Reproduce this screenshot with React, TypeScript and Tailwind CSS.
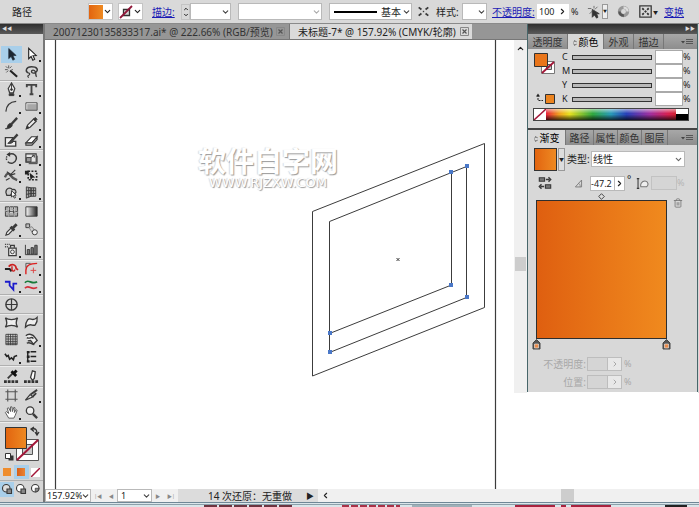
import React from "react";
import { ChevronDown, ChevronRight, ChevronLeft, ChevronUp, Trash2 } from "lucide-react";

const Icon: React.FC<{ children: React.ReactNode; className?: string }> = ({
  children,
  className = "size-4",
}) => (
  <svg
    viewBox="0 0 16 16"
    className={`${className} shrink-0`}
    fill="none"
    stroke="#3a3a3a"
    strokeWidth="1"
    aria-hidden="true"
  >
    {children}
  </svg>
);

type Tool = { name: string; more?: boolean; active?: boolean; icon: React.ReactNode };

const arrow = "M5 1.5v11l2.6-2.4 1.8 4 2-1-1.8-3.8 3.4-.3z";

const toolGroups: { height: string; tools: Tool[] }[] = [
  {
    height: "h-[17px]",
    tools: [
      { name: "选择", active: true, icon: <path d={arrow} fill="#1c2733" stroke="#1c2733" strokeWidth=".6" /> },
      { name: "直接选择", more: true, icon: <path d={arrow} fill="#fff" stroke="#222" strokeWidth="1.2" /> },
      {
        name: "魔棒",
        icon: (
          <>
            <path d="M6.500 7l7.500 6.500" strokeWidth="2.200" stroke="#222" />
            <path d="M5 1.500v3M2 2.500l2 2M8 2.500l-2 2M1 6h3M2.500 9l2-2M8 6h1.500" stroke="#555" />
          </>
        ),
      },
      {
        name: "套索",
        icon: (
          <>
            <path d="M4.500 9.500C1 8 2 3 8 3s7.500 3 5 5.500c-2 2-5 1.500-5-.5s3-2 4 0 0 4 1.500 5.500" strokeWidth="1.500" />
            <path d="M4.500 9.500c2 0 2 2 .5 2.500s-1 1.500 0 2.500" strokeWidth="1.300" />
          </>
        ),
      },
    ],
  },
  {
    height: "h-[17px]",
    tools: [
      {
        name: "钢笔",
        more: true,
        icon: (
          <>
            <path d="M8 1L4.500 7l1.500 4.500h4L11.500 7z" fill="#eee" strokeWidth="1.300" />
            <path d="M8 2v6" />
            <circle cx="8" cy="8" r="1" fill="#333" />
            <path d="M5.500 12.500h5v2h-5z" fill="#333" />
          </>
        ),
      },
      { name: "文字", more: true, icon: <path d="M3 5.500V3h10v2.500M8 3v10M6 13h4" strokeWidth="2" stroke="#444" /> },
      { name: "弧形", more: true, icon: <path d="M2 13.500C2.500 7 6 3 13 2.500" strokeWidth="1.300" /> },
      {
        name: "矩形",
        more: true,
        icon: (
          <>
            <path d="M2 4h12v8H2z" fill="#a8a8a8" stroke="#555" />
            <path d="M3 11V5h10" stroke="#ddd" />
          </>
        ),
      },
      {
        name: "画笔",
        icon: (
          <>
            <path d="M14 2L7.500 9" strokeWidth="2.500" />
            <path d="M8 8.500c1.500 1.500.5 3-1.500 4S2 14 1.500 13.500c2 0 2-1 2.500-3s2.500-3.500 4-2z" fill="#333" />
          </>
        ),
      },
      {
        name: "铅笔",
        more: true,
        icon: (
          <>
            <path d="M4 9.500L10.500 3l2.500 2.500L6.500 12 2.500 13.500z" fill="#eee" strokeWidth="1.300" />
            <path d="M10 3.500l2 2 2-2-2-2zM2.500 13.500l1-3 2 2z" fill="#333" />
          </>
        ),
      },
      {
        name: "斑点画笔",
        icon: (
          <>
            <path d="M1.500 5h8l-2 4h5v5h-11z" fill="#eee" strokeWidth="1.400" />
            <path d="M14.500 1.500L9 7.500" strokeWidth="2.500" />
            <path d="M8.500 7C6 7.500 6.500 10 4 11c3 .5 6-.5 6-2.500z" fill="#444" />
          </>
        ),
      },
      {
        name: "橡皮擦",
        more: true,
        icon: (
          <>
            <path d="M2 10.500L8 4h6l-5.500 6.500z" fill="#fff" strokeWidth="1.200" />
            <path d="M2 10.500V13h6.500l5.500-6V4l-5.500 6.500z" fill="#aaa" strokeWidth="1.200" />
          </>
        ),
      },
    ],
  },
  {
    height: "h-[17px]",
    tools: [
      {
        name: "旋转",
        more: true,
        icon: (
          <>
            <path d="M5 3.500c6-2 9 2 8 5.500-1 4-6 5.500-9 2.500" strokeWidth="1.500" />
            <path d="M3 9.500C2 8 2.500 6 4 5" strokeDasharray="1.500 1" strokeWidth="1.500" />
            <path d="M6.500 1v5L2.500 3.800z" fill="#333" stroke="none" />
          </>
        ),
      },
      {
        name: "比例缩放",
        more: true,
        icon: (
          <>
            <path d="M2 3h11v9H2z" fill="#e5e5e5" strokeWidth="1.200" />
            <path d="M2.500 7h5v4.500h-5z" fill="#999" />
            <path d="M7.500 7L11 4.500M8.500 4.500H11V7M14 5v8.500H5" />
          </>
        ),
      },
      {
        name: "变形",
        more: true,
        icon: (
          <>
            <path d="M1 10c2-5 4-5 6-2s4 4 7 5" strokeWidth="2.500" stroke="#555" />
            <path d="M3 4l4 3 5-5M6 8l6-2M2 13l4-2" strokeWidth="1.200" />
          </>
        ),
      },
      {
        name: "自由变换",
        icon: (
          <>
            <path d="M4.500 3.500h9v9h-9z" strokeDasharray="2 1.500" strokeWidth="1.700" stroke="#222" />
            <path d="M1 3h4v4H1zM6 5l6 5-3 .5L7 13z" fill="#222" stroke="none" />
          </>
        ),
      },
      {
        name: "符号喷枪",
        more: true,
        icon: (
          <>
            <path d="M2 8c0-5 5-6 7-3 3-1 5 2 3 4H8l-1 2H3z" fill="#ccc" strokeWidth="1.300" />
            <path d="M8 6v7l1.700-1.700L11 14l1.300-.6-1.300-2.500H13z" fill="#fff" />
          </>
        ),
      },
      {
        name: "透视",
        more: true,
        icon: (
          <>
            <path d="M2.500 2l5 1v9l-5 2zM7.500 3h5v9h-5z" fill="#aaa" />
            <path d="M5 2.500v10.500M10 3v9M2.500 6h10M2.500 10l5-1h5" />
          </>
        ),
      },
    ],
  },
  {
    height: "h-[18px]",
    tools: [
      {
        name: "网格",
        icon: (
          <>
            <path d="M1.500 3h13v10h-13z" fill="#aaa" />
            <path d="M5.500 3c2 3-1 6 0 10M10.500 3c-2 4 1 7 0 10M1.500 8c4-2 8 2 13 0" stroke="#eee" strokeWidth="2" />
            <path d="M5.500 3c2 3-1 6 0 10M10.500 3c-2 4 1 7 0 10M1.500 8c4-2 8 2 13 0" />
          </>
        ),
      },
      {
        name: "渐变",
        icon: (
          <>
            <defs>
              <linearGradient id="toolGradient">
                <stop offset="0" stopColor="#fff" />
                <stop offset="1" stopColor="#222" />
              </linearGradient>
            </defs>
            <path d="M2 3h12v10H2z" fill="url(#toolGradient)" />
          </>
        ),
      },
      {
        name: "吸管",
        more: true,
        icon: (
          <>
            <path d="M2 14l1-3 5-5 2 2-5 5z" fill="#eee" strokeWidth="1.200" />
            <path d="M7 5l4 4M9.500 6.500l4-4" strokeWidth="3" />
          </>
        ),
      },
      {
        name: "混合",
        icon: (
          <>
            <path d="M2 2h4v4H2z" fill="#bbb" />
            <path d="M5.500 6l3-1 3 4-3 2z" fill="#ccc" stroke="#888" />
            <circle cx="11.500" cy="11" r="2.700" fill="#eee" />
          </>
        ),
      },
    ],
  },
  {
    height: "h-[20px]",
    tools: [
      {
        name: "符号喷枪器",
        more: true,
        icon: (
          <>
            <path d="M5 6.500h8v8H5z" fill="#eee" strokeWidth="1.300" />
            <path d="M7 6V3.500h4V6" strokeWidth="1.300" />
            <path d="M1 2.500h6M1 5h4" strokeDasharray="1 1" strokeWidth="1.500" />
            <circle cx="9" cy="10.500" r="2" />
          </>
        ),
      },
      {
        name: "柱形图",
        more: true,
        icon: (
          <>
            <path d="M1.500 3v10.500h13" />
            <path d="M3.500 8h2.500v5H3.500zM7.500 6H10v7H7.500zM11.500 3.500h2.500V13h-2.500z" fill="#777" />
          </>
        ),
      },
    ],
  },
  {
    height: "h-[17px]",
    tools: [
      {
        name: "路径笔",
        more: true,
        icon: (
          <>
            <path d="M1 8.500h5l2 2.500" stroke="#222" strokeWidth="2.200" />
            <path d="M5 6c3-4 8-2 8 2l2 1.500" stroke="#c22" strokeWidth="1.800" />
            <path d="M8.500 5.500v4c1 2 3 1.500 3-.5" stroke="#c22" strokeWidth="1.500" />
          </>
        ),
      },
      {
        name: "圆角",
        more: true,
        icon: (
          <>
            <path d="M2 14V10C2 5 5 2.500 14 2.500" stroke="#d22" strokeWidth="1.500" />
            <path d="M2 7V2.500h5" stroke="#555" />
            <path d="M10 7v6M7 10h6" stroke="#d44" />
          </>
        ),
      },
      { name: "折线", more: true, icon: <path d="M1 4h5v4l4 4.500V6h4" stroke="#1a1acc" strokeWidth="1.900" /> },
      {
        name: "波浪",
        more: true,
        icon: (
          <>
            <path d="M1 5c4-5 7 3 13-1" stroke="#197a3a" strokeWidth="1.800" />
            <path d="M1 11c4-5 7 3 13-1" stroke="#d3303a" strokeWidth="1.800" />
          </>
        ),
      },
    ],
  },
  {
    height: "h-[18px]",
    tools: [
      {
        name: "定位",
        icon: (
          <>
            <circle cx="8" cy="8" r="6" strokeWidth="1.500" />
            <path d="M8 2v12M2 8h12" strokeWidth="1.300" />
          </>
        ),
      },
    ],
  },
  {
    height: "h-[17px]",
    tools: [
      { name: "封套", icon: <path d="M1.500 3c3 2.500 10 2.500 13 0-2 3.500-2 6.500 0 10-3-2.500-10-2.500-13 0 2-3.500 2-6.500 0-10z" fill="#eee" strokeWidth="1.400" /> },
      { name: "旗形", icon: <path d="M1.500 13c0-4 1-6 2.500-8 3-3 5 3 10-2.500.5 4-.5 6-2 8-3 2-5-3-10.500 2.500z" fill="#eee" strokeWidth="1.400" /> },
      { name: "网点", icon: <path d="M2 2.500h12v11H2zM2 5h12M2 7.500h12M2 10h12M2 12h12M4.500 2v12M7 2v12M9.500 2v12M12 2v12" strokeWidth=".9" /> },
      {
        name: "涂抹",
        more: true,
        icon: (
          <>
            <path d="M2 4c3-3 8-1 9 1l3 4-4 4-3-4-3 .5" fill="#eee" strokeWidth="1.500" />
            <path d="M3 6c3 2 5-2 7 1M3 12c3-2 5 1 8 1.500" strokeWidth="1.500" />
          </>
        ),
      },
      { name: "褶皱", more: true, icon: <path d="M1 5l2 3 1.500-1L6 11l2-1.500 2 2L11 8l3-1" strokeWidth="1.700" stroke="#222" /> },
      {
        name: "分布",
        icon: (
          <>
            <path d="M7 3h6M7 8h6M7 13h6M4 3v10" strokeWidth="1.500" stroke="#222" />
            <path d="M3 2h3v2.500H3zM3 7h3v2.500H3zM3 12h3v2.500H3z" fill="#222" stroke="none" />
          </>
        ),
      },
    ],
  },
  {
    height: "h-[20px]",
    tools: [
      {
        name: "取色",
        icon: (
          <>
            <path d="M4 10l5-5" strokeWidth="2" />
            <path d="M8 2.500l5 5M10 5l3.500-3.500" strokeWidth="3" stroke="#111" />
            <path d="M0 13.500h16" strokeDasharray="3 1" strokeWidth="3" stroke="#333" />
          </>
        ),
      },
      {
        name: "着色",
        icon: (
          <>
            <path d="M7 9l2-7 3 1-1 7-2 2z" fill="#fff" strokeWidth="1.400" />
            <path d="M0 13.500h16" strokeDasharray="3 1" strokeWidth="3" stroke="#333" />
          </>
        ),
      },
    ],
  },
  {
    height: "h-[17px]",
    tools: [
      { name: "画板", icon: <path d="M4 1.500v13M12 1.500v13M1.500 4h13M1.500 12h13" strokeWidth="1.200" stroke="#555" /> },
      {
        name: "切片",
        more: true,
        icon: (
          <>
            <path d="M1.500 13l5-6 3 2.500z" fill="#eee" strokeWidth="1.300" />
            <path d="M7 7l7-5M9 9.500l4-4" strokeWidth="2" />
          </>
        ),
      },
      {
        name: "抓手",
        more: true,
        icon: <path d="M5 14L1.500 8l1-1L5 9 3.500 3.500 5 3l2 4V2h1.500l.5 5 1.500-4.500 1.300.5L11 8l2-3 1 .7-2 5.300-1.500 3z" fill="#fff" stroke="#555" />,
      },
      {
        name: "缩放",
        icon: (
          <>
            <circle cx="6.500" cy="6" r="4" fill="#eee" strokeWidth="1.400" />
            <path d="M9.500 9.500l4.500 4.500" strokeWidth="2.500" />
          </>
        ),
      },
    ],
  },
];

const NoPaint = ({ className }: { className: string }) => (
  <svg viewBox="0 0 14 14" className={`${className} shrink-0`} fill="none" aria-hidden="true">
    <path d="M0 0h14v14H0z" fill="#fff" />
    <path d="M4.500 4.500h6v6h-6z" fill="#d8d8d8" stroke="#333" strokeWidth="1.300" />
    <path d="M1 13L13 1" stroke="#8f1638" strokeWidth="1.800" />
  </svg>
);

const Dropdown: React.FC<{ label: string; className: string; options?: string[]; muted?: boolean }> = ({
  label,
  className,
  options = [""],
  muted,
}) => (
  <span className={`relative shrink-0 border-[#b9b9b9] bg-white ${className}`}>
    <select
      aria-label={label}
      className="block size-full appearance-none bg-transparent pl-px pr-2 text-inherit outline-none"
    >
      {options.map((option) => (
        <option key={option}>{option}</option>
      ))}
    </select>
    <ChevronDown
      className={`pointer-events-none absolute right-0 top-1/2 size-[9px] -translate-y-1/2 ${
        muted ? "text-[#aaa]" : "text-[#444]"
      }`}
      strokeWidth={3}
    />
  </span>
);

const TopBar = () => (
  <header className="flex h-[24px] shrink-0 items-center overflow-hidden border-b border-[#8a8a8a] bg-[#d9d9d9] pl-[12px]">
    <span className="w-[76px] shrink-0">路径</span>
    <button aria-label="填色" className="flex h-[17px] shrink-0 items-center border border-[#c4c4c4] bg-white">
      <span className="size-[14px] bg-linear-to-r from-[#e2640f] to-[#ee8a22]" />
      <ChevronDown className="size-[9px]" strokeWidth={3} />
    </button>
    <button aria-label="描边颜色" className="ml-[5px] flex h-[17px] shrink-0 items-center border border-[#c4c4c4] bg-white">
      <NoPaint className="size-[14px]" />
      <ChevronDown className="size-[9px]" strokeWidth={3} />
    </button>
    <a href="#stroke" className="ml-[9px] w-[29px] shrink-0 text-[#1b1bb5] underline">
      描边:
    </a>
    <button aria-label="调整描边粗细" className="flex h-[16px] w-[9px] shrink-0 flex-col items-center justify-center border border-[#c4c4c4]">
      <ChevronUp className="size-[6px]" strokeWidth={4} />
      <ChevronDown className="size-[6px]" strokeWidth={4} />
    </button>
    <Dropdown label="描边粗细" className="h-[17px] w-[41px] border" />
    <Dropdown label="宽度配置" className="ml-[7px] h-[17px] w-[84px] border" muted />
    <span className="ml-[7px] flex h-[17px] w-[83px] shrink-0 items-center border border-[#b9b9b9] bg-white pl-[4px]">
      <span className="h-[2px] flex-1 bg-black" />
      <Dropdown label="画笔定义" className="h-[15px] w-[34px] pl-[3px]" options={["基本"]} />
    </span>
    <Icon className="ml-[6px] size-[11px]">
      <path d="M1 2l4 3M15 2l-4 3M1 14l4-3M15 14l-4-3" strokeWidth="2.600" />
      <path d="M7 8h2" strokeWidth="2" />
    </Icon>
    <span className="ml-[7px] w-[26px] shrink-0">样式:</span>
    <Dropdown label="样式" className="h-[17px] w-[25px] border" />
    <a href="#opacity" className="ml-[5px] w-[45px] shrink-0 whitespace-nowrap text-[#1b1bb5] underline">
      不透明度:
    </a>
    <input
      aria-label="不透明度"
      defaultValue="100"
      className="h-[15px] w-[21px] shrink-0 bg-white pl-[2px] text-[9px] outline-none"
    />
    <button aria-label="不透明度滑块" className="flex h-[15px] w-[11px] shrink-0 items-center bg-white">
      <ChevronRight className="size-[9px]" strokeWidth={3} />
    </button>
    <span className="ml-[2px] w-[16px] shrink-0 text-[9px]">%</span>
    <button aria-label="选择类似对象" className="flex h-[16px] shrink-0 items-center">
      <Icon className="size-[14px]">
        <path d="M1 4h4M8 1v3M3 10l3-3M12 2l-3 3" strokeWidth="1" stroke="#666" />
        <path d="M6 5v9l2.500-2.500L11 15l1.500-1L11 10h3z" fill="#333" />
      </Icon>
      <span className="ml-px h-[15px] w-[6px] border border-[#999] bg-[#eee] text-center text-[4px] leading-[13px]">▼</span>
    </button>
    <button aria-label="重新着色" className="ml-[9px] shrink-0">
      <Icon className="size-[13px]">
        <circle cx="8" cy="8" r="5" stroke="#999" strokeWidth="4" />
        <path d="M3 8a5 5 0 0 0 5.500 5" stroke="#555" strokeWidth="3" />
        <path d="M13 8A5 5 0 0 0 8 3" stroke="#ddd" strokeWidth="3" />
      </Icon>
    </button>
    <button aria-label="对齐" className="ml-[9px] flex shrink-0 items-center">
      <Icon className="size-[13px]">
        <path d="M1 1h14v14H1z" strokeWidth="1.600" />
        <path d="M4 4l2 2M12 4l-2 2M4 12l2-2M12 12l-2-2" strokeWidth="2.200" />
        <circle cx="8" cy="8" r="1" fill="#333" />
      </Icon>
      <span className="ml-px text-[5px]">▼</span>
    </button>
    <a href="#transform" className="ml-[6px] shrink-0 text-[#1b1bb5] underline">
      变换
    </a>
  </header>
);

const Toolbox = () => (
  <aside className="flex w-[45px] shrink-0 flex-col border-r-2 border-[#777] bg-[#d6d6d6]">
    <div className="h-[10px] bg-linear-to-b from-[#2f2f2f] to-[#5a5a5a] pl-[2px] text-[5px] leading-[9px] text-[#ddd]">
      ◀◀
    </div>
    <div className="pt-[12px]">
      {toolGroups.map((group) => (
        <div key={group.tools[0].name} className="grid grid-cols-2 border-b border-[#b0b0b0] pl-px pr-px shadow-[0_1px_0_#ececec]">
          {group.tools.map((tool) => (
            <button
              key={tool.name}
              aria-label={tool.name}
              className={`relative flex items-center justify-center ${group.height} ${
                tool.active ? "bg-[#a9cfea]" : ""
              }`}
            >
              <Icon className="size-[15px]">{tool.icon}</Icon>
              {tool.more && <span className="absolute bottom-px right-px size-[2px] bg-[#222]" />}
            </button>
          ))}
        </div>
      ))}
    </div>
    <div className="flex h-[42px] items-start justify-center pt-[4px]">
      <svg viewBox="0 0 38 36" className="h-[36px] w-[38px]" fill="none" aria-label="填色和描边">
        <defs>
          <linearGradient id="toolFill">
            <stop offset="0" stopColor="#e2640f" />
            <stop offset="1" stopColor="#ee8a22" />
          </linearGradient>
        </defs>
        <path d="M13.500 13.500h22v21h-22z" fill="#fff" stroke="#555" />
        <path d="M19.500 18.500h10v10h-10z" fill="#ccc" stroke="#555" />
        <path d="M14 34L35 14" stroke="#a31638" strokeWidth="2" />
        <path d="M2.500 1.500h21v21h-21z" fill="url(#toolFill)" stroke="#333" />
        <path d="M29 3c4-1 5 1 5 5M31 1l-3 2 3 2.500M32 6l2 3 2-3" stroke="#333" strokeWidth="1.300" />
        <path d="M5.500 29.500h5v5h-5z" fill="#333" />
        <path d="M2.500 27.500h5v5h-5z" fill="#fff" stroke="#333" />
      </svg>
    </div>
    <div className="grid h-[16px] grid-cols-3 place-items-center">
      <button aria-label="颜色" className="size-[8px] bg-[#ef8c2c]" />
      <button aria-label="渐变填充" className="flex h-[14px] w-full items-center justify-center bg-[#a9cfea]">
        <span className="size-[8px] bg-linear-to-r from-[#d85f18] to-[#ea8433]" />
      </button>
      <button aria-label="无">
        <svg viewBox="0 0 9 9" className="size-[9px] bg-white" aria-hidden="true">
          <path d="M0 9L9 0" stroke="#a31638" strokeWidth="1.500" />
        </svg>
      </button>
    </div>
    <div className="grid h-[17px] grid-cols-3 place-items-center border-t border-[#b0b0b0]">
      {["正常绘图", "背面绘图", "内部绘图"].map((mode, i) => (
        <button
          key={mode}
          aria-label={mode}
          className={`flex h-[15px] w-full items-center justify-center ${i === 0 ? "bg-[#a9cfea]" : ""}`}
        >
          <Icon className="size-[12px]">
            <circle cx="7" cy="7" r="5" fill={i === 0 ? "#ddd" : "#fff"} strokeWidth="1.500" />
            {i < 2 ? <path d="M8 8h6v6H8z" fill="#888" strokeWidth="1.500" /> : <path d="M7 7h5a5 5 0 0 1-5 5z" fill="#888" />}
          </Icon>
        </button>
      ))}
    </div>
  </aside>
);

const CloseBox = () => (
  <svg viewBox="0 0 9 9" className="size-[9px] shrink-0" fill="none" aria-hidden="true">
    <path d="M.5.5h8v8h-8z" stroke="#888" />
    <path d="M2.500 2.500l4 4M6.500 2.500l-4 4" stroke="#555" strokeWidth="1.200" />
  </svg>
);

const DocumentTabs = () => (
  <nav className="flex h-[16px] shrink-0 overflow-hidden border-b border-[#777] bg-[#969696] whitespace-nowrap">
    <div className="flex w-[245px] shrink-0 items-center justify-between border-r border-[#777] pl-[8px] pr-[4px] text-[#333]">
      <button>20071230135833317.ai* @ 222.66% (RGB/预览)</button>
      <button aria-label="关闭">
        <CloseBox />
      </button>
    </div>
    <div className="flex w-[182px] shrink-0 items-center justify-between bg-[#dadada] pl-[8px] pr-[3px]">
      <button>未标题-7* @ 157.92% (CMYK/轮廓)</button>
      <button aria-label="关闭">
        <CloseBox />
      </button>
    </div>
  </nav>
);

const anchors = [
  [405, 132],
  [421, 126],
  [421, 257],
  [405, 245],
  [284, 293],
  [284, 312],
];

const Canvas = () => (
  <div className="relative min-w-0 flex-1 overflow-hidden bg-white">
    <svg viewBox="0 0 469 449" className="block h-[449px] w-[469px]" fill="none" stroke="#3c3c3c">
      <path d="M10.500 0v449M450.500 0v449" strokeWidth="1.200" />
      <path d="M267.500 171.500l172-68v164l-172 68.500z" />
      <path d="M284.500 181.500l137-55v131l-137 55zM406.500 132.500v112.500l-122 48.500" />
      <path d="M351.500 218l3 3M354.500 218l-3 3" />
      {anchors.map(([x, y]) => (
        <rect key={`${x}-${y}`} x={x - 1} y={y - 2} width="4" height="4" fill="#4a78c8" stroke="none" />
      ))}
    </svg>
    <div className="absolute left-[153px] top-[105px] flex flex-col items-center text-white [text-shadow:1px_1px_1px_#999,-1px_0_1px_#ddd]">
      <span className="text-[28px] leading-[32px] font-bold">软件自字网</span>
      <span className="font-['DejaVu_Sans'] text-[13px] leading-[12px]">WWW.RJZXW.COM</span>
    </div>
  </div>
);

const VerticalScroll = () => (
  <div className="flex h-[353px] w-[13px] shrink-0 flex-col items-center bg-[#f0f0f0]">
    <button aria-label="向上滚动" className="flex h-[16px] items-center">
      <ChevronUp className="size-[9px]" strokeWidth={3} />
    </button>
    <span className="mt-[201px] h-[14px] w-[11px] bg-[#cdcdcd]" />
  </div>
);

const PanelTabs: React.FC<{ tabs: { name: string; width: string }[]; active: string }> = ({ tabs, active }) => (
  <div className="flex h-[15px] items-stretch bg-linear-to-b from-[#a8a8a8] to-[#8d8d8d] text-[#333]">
    {tabs.map((tab) => (
      <button
        key={tab.name}
        className={`shrink-0 whitespace-nowrap border-r border-[#777] text-center text-[10px] leading-[14px] ${tab.width} ${
          tab.name === active ? "bg-[#d8d8d8] text-black" : ""
        }`}
      >
        {tab.name === active && (
          <svg viewBox="0 0 5 8" className="mr-[2px] inline h-[8px] w-[4px]" fill="none" stroke="#333" aria-hidden="true">
            <path d="M.5 3l2-2 2 2M.5 5l2 2 2-2" />
          </svg>
        )}
        {tab.name}
      </button>
    ))}
    <button aria-label="面板菜单" className="ml-auto mr-[4px] flex items-center">
      <svg viewBox="0 0 12 8" className="h-[8px] w-[12px]" fill="none" stroke="#444" aria-hidden="true">
        <path d="M0 3h4L2 5.500z" fill="#444" stroke="none" />
        <path d="M5 1.500h7M5 3.500h7M5 5.500h7" strokeWidth=".8" />
      </svg>
    </button>
  </div>
);

const ColorPanel = () => (
  <section className="h-[79px] px-[5px] pt-px">
    <div className="flex">
      <div className="h-[56px] w-[29px] shrink-0 pt-[2px]">
        <svg viewBox="0 0 24 52" className="h-[52px] w-[24px]" fill="none" aria-label="填色和描边">
          <path d="M8.500 9.500h13v12h-13z" fill="#fff" stroke="#777" />
          <path d="M13.500 12.500h5v5h-5z" fill="#ccc" stroke="#555" />
          <path d="M9 21L21 10" stroke="#a31638" strokeWidth="1.800" />
          <path d="M1.500 1.500h13v13h-13z" fill="#e9751a" stroke="#333" />
          <path d="M12.500 42.500h9v9h-9z" fill="#ec8420" stroke="#333" />
          <path d="M5 43v5.500h5" stroke="#222" strokeDasharray="2 1" />
          <path d="M3 44.500l2-3 2 3z" fill="#222" />
        </svg>
      </div>
      <div className="flex-1">
        {["C", "M", "Y", "K"].map((channel) => (
          <div key={channel} className="flex h-[14px] items-center text-[9px]">
            <label htmlFor={`channel-${channel}`} className="w-[10px] shrink-0">
              {channel}
            </label>
            <input
              id={`channel-${channel}`}
              type="range"
              defaultValue={0}
              className="h-[5px] w-0 min-w-0 flex-1 appearance-none border border-[#333] bg-[#b9b9b9] [&::-webkit-slider-thumb]:appearance-none"
            />
            <input
              aria-label={`${channel} 值`}
              className="ml-[3px] h-[14px] w-[28px] shrink-0 border border-[#aaa] bg-white outline-none"
            />
            <span className="w-[9px] shrink-0 text-[9px]">%</span>
          </div>
        ))}
      </div>
    </div>
    <div className="mr-[3px] mt-[2px] flex h-[13px] border border-[#444]">
      <svg viewBox="0 0 12 11" className="h-full w-[12px] bg-white" aria-hidden="true">
        <path d="M0 11L12 0" stroke="#a31638" strokeWidth="1.500" />
      </svg>
      <div className="flex-1 bg-[linear-gradient(to_bottom,#ffffff88,transparent_40%,transparent_50%,#000000bb),linear-gradient(to_right,#e8203a,#f0a020_10%,#e8e020_18%,#30a840_36%,#2a9ab8_50%,#2840b8_62%,#a030a0_80%,#d82050_94%,#d02030)]" />
      <div className="w-[12px] bg-linear-to-b from-white from-50% to-black to-50%" />
    </div>
  </section>
);

const Stop = () => (
  <svg viewBox="0 0 9 11" className="h-[11px] w-[9px]" aria-label="渐变滑块">
    <path d="M4.500.5L8 4v6H1V4z" fill="#555" stroke="#444" />
    <path d="M2.500 5h4v4h-4z" fill="#e78a4c" stroke="#eee" strokeWidth=".6" />
  </svg>
);

const DisabledField: React.FC<{ label: string; id: string }> = ({ label, id }) => (
  <div className="flex h-[18px] items-center text-[#a8a8a8]">
    <label htmlFor={id} className="w-[54px] text-right">
      {label}
    </label>
    <input id={id} disabled className="ml-px h-[14px] w-[20px] border border-r-0 border-[#bdbdbd] bg-[#d5d5d5]" />
    <button disabled aria-label={`${label}滑块`} className="flex h-[14px] w-[15px] items-center justify-center border border-[#bdbdbd] bg-[#e8e8e8]">
      <ChevronRight className="size-[8px]" strokeWidth={3} />
    </button>
    <span className="ml-[2px] text-[9px]">%</span>
  </div>
);

const GradientPanel = () => (
  <section className="pb-px pl-[4px] pr-[12px]">
    <div className="flex h-[28px] items-center pl-[2px]">
      <span className="size-[23px] shrink-0 border border-[#333] bg-linear-to-r from-[#e2640f] to-[#ee8a22]" />
      <button aria-label="渐变预设" className="ml-px flex h-[23px] w-[7px] shrink-0 items-center border border-[#999] bg-[#ddd] text-[5px]">
        ▼
      </button>
      <label htmlFor="gradient-type" className="ml-[2px] w-[24px] shrink-0 whitespace-nowrap">
        类型:
      </label>
      <span className="relative w-0 min-w-0 flex-1">
        <select id="gradient-type" className="block h-[16px] w-full appearance-none border border-[#b9b9b9] bg-white pl-px outline-none">
          <option>线性</option>
        </select>
        <ChevronDown className="pointer-events-none absolute right-[2px] top-[4px] size-[9px] text-[#666]" strokeWidth={3} />
      </span>
    </div>
    <div className="flex h-[20px] items-center pl-[2px]">
      <button aria-label="反向渐变" className="ml-[4px]">
        <Icon className="size-[14px]">
          <path d="M1.500 2h6v4h-6zM8.500 10h6v4h-6z" fill="#777" strokeWidth="1.300" />
          <path d="M9 4h4M12 1.500L14.500 4 12 6.500M7 12H3M4 9.500L1.500 12 4 14.500" strokeWidth="1.600" />
        </Icon>
      </button>
      <Icon className="ml-[22px] size-[11px]">
        <path d="M2 13L11 3v10z" strokeWidth="1.300" stroke="#777" />
        <path d="M7 8c2 1 2 3 2 5" stroke="#777" />
      </Icon>
      <input
        aria-label="角度"
        defaultValue="-47.2"
        className="ml-[5px] h-[15px] w-[24px] shrink-0 border border-r-0 border-[#b9b9b9] bg-white text-[9px] outline-none"
      />
      <button aria-label="角度滑块" className="flex h-[15px] w-[11px] shrink-0 items-center border border-[#b9b9b9] bg-white">
        <ChevronRight className="size-[9px]" strokeWidth={3} />
      </button>
      <span className="ml-[2px] w-[9px] shrink-0 self-start">°</span>
      <Icon className="size-[13px]">
        <path d="M2.500 2v12M1 2h3M1 14h3" strokeWidth="1.300" />
        <path d="M6 12c-1-3 1-7 5-7s5 5 2 7z" fill="#eee" stroke="#777" strokeWidth="1.300" />
      </Icon>
      <input
        aria-label="长宽比"
        disabled
        className="ml-[2px] h-[14px] w-0 min-w-0 flex-1 border border-[#c2c2c2] bg-[#d5d5d5]"
      />
      <span className="w-[8px] shrink-0 text-[9px] text-[#b5b5b5]">%</span>
    </div>
    <div className="flex">
      <div className="w-[139px]">
        <svg viewBox="0 0 8 8" className="mx-auto block size-[7px]" aria-label="渐变中点">
          <path d="M4 .8L7.200 4 4 7.200.8 4z" fill="#ddd" stroke="#333" />
        </svg>
        <div className="mx-[4px] h-[139px] border border-[#2e2e2e] bg-linear-to-r from-[#df5f10] to-[#f08a1e]" />
        <div className="flex justify-between">
          <Stop />
          <Stop />
        </div>
      </div>
      <button aria-label="删除色标" className="mt-[5px] ml-[2px] h-[10px] shrink-0 text-[#777]">
        <Trash2 className="size-[10px]" />
      </button>
    </div>
    <div className="mt-[5px]">
      <DisabledField label="不透明度:" id="stop-opacity" />
      <DisabledField label="位置:" id="stop-location" />
    </div>
  </section>
);

const Panels = () => (
  <aside className="w-[171px] shrink-0 self-start border-x border-[#47666a] bg-[#d8d8d8]">
    <div className="h-[10px] bg-linear-to-b from-[#2f2f2f] to-[#5a5a5a] pr-[2px] text-right text-[5px] leading-[9px] text-[#ddd]">
      ▶▶
    </div>
    <PanelTabs
      active="颜色"
      tabs={[
        { name: "透明度", width: "w-[40px]" },
        { name: "颜色", width: "w-[36px]" },
        { name: "外观", width: "w-[30px]" },
        { name: "描边", width: "w-[30px]" },
      ]}
    />
    <ColorPanel />
    <div className="h-[2px] bg-[#444]" />
    <PanelTabs
      active="渐变"
      tabs={[
        { name: "渐变", width: "w-[38px]" },
        { name: "路径", width: "w-[28px]" },
        { name: "属性", width: "w-[24px]" },
        { name: "颜色", width: "w-[24px]" },
        { name: "图层", width: "w-[26px]" },
      ]}
    />
    <GradientPanel />
  </aside>
);

const StatusBar = () => (
  <div className="flex h-[13px] shrink-0 items-center bg-[#f0f0f0] text-[9px]">
    <Dropdown label="缩放比例" className="h-[13px] w-[46px] border" options={["157.92%"]} />
    <div className="flex w-[26px] shrink-0 justify-around text-[5px] text-[#888]">
      <button aria-label="首项">|◀</button>
      <button aria-label="上一项">◀</button>
    </div>
    <Dropdown label="画板" className="h-[13px] w-[35px] border pl-[2px]" options={["1"]} />
    <div className="flex w-[26px] shrink-0 justify-around text-[5px] text-[#888]">
      <button aria-label="下一项">▶</button>
      <button aria-label="末项">▶|</button>
    </div>
    <div className="flex h-full w-[140px] shrink-0 items-center justify-between bg-[#dcdcdc] pl-[30px] pr-[4px] text-[10px]">
      <span>14 次还原：无重做</span>
      <button aria-label="状态菜单" className="text-[8px]">
        ▶
      </button>
    </div>
    <button aria-label="向左滚动" className="ml-[3px]">
      <ChevronLeft className="size-[9px]" strokeWidth={3} />
    </button>
    <span className="ml-[231px] h-full w-[13px] bg-[#cdcdcd]" />
  </div>
);

// sliver of the window that lies behind the application
const Backdrop = () => (
  <footer className="h-[5px] shrink-0 overflow-hidden border-t border-[#6f8796] bg-[#dbe6ea]">
    <div className="mt-px border-t border-[#8ba0aa]" />
    <div className="flex h-[2px]">
      <span className="ml-[204px] w-[90px] bg-[repeating-linear-gradient(to_right,#6d3440_0_13px,transparent_13px_15px)]" />
      <span className="ml-[48px] w-[58px] bg-[repeating-linear-gradient(to_right,#a83248_0_7px,transparent_7px_9px)]" />
      <span className="ml-[12px] w-[60px] bg-[#9fb0b8]" />
      <span className="ml-[43px] w-[40px] bg-[#a8233f]" />
      <span className="ml-[6px] w-[5px] bg-[#a8233f]" />
      <span className="ml-[5px] w-[40px] bg-[#a8233f]" />
      <span className="ml-[54px] w-[22px] bg-[#222]" />
    </div>
  </footer>
);

const App: React.FC = () => {
  return (
    <div className="flex h-screen flex-col overflow-hidden bg-white font-['Noto_Sans','Noto_Sans_CJK_SC',sans-serif] text-[10px] leading-[12px] text-[#222]">
      <TopBar />
      <main className="flex min-h-0 flex-1">
        <Toolbox />
        <div className="flex min-w-0 flex-1 flex-col">
          <div className="flex min-h-0 flex-1">
            <div className="flex min-w-0 flex-1 flex-col">
              <DocumentTabs />
              <div className="flex min-h-0 flex-1">
                <Canvas />
                <VerticalScroll />
              </div>
            </div>
            <Panels />
            <div className="h-[369px] w-px shrink-0 bg-[#d8d8d8]" />
          </div>
          <StatusBar />
        </div>
      </main>
      <Backdrop />
    </div>
  );
};

export default App;
